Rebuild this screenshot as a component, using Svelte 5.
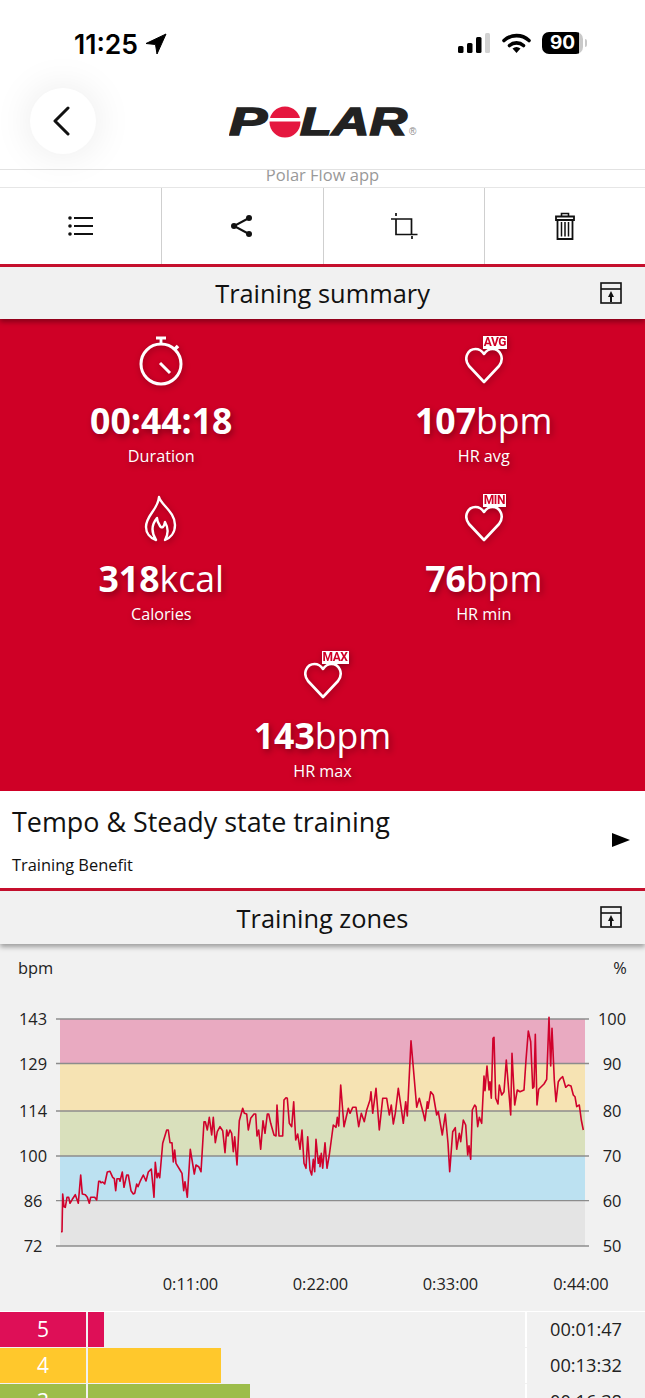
<script>
	// hr trace, measured as (x*3, y*3) from the top of the chart crop
	const hrLeft = [183,695,186,695,188,582,192,620,196,622,201,592,206,592,210,610,217,598,226,584,235,610,242,525,247,582,256,584,262,592,268,610,272,592,284,592,290,600,296,544,300,544,303,548,308,546,314,552,322,516,330,514,338,532,343,536,347,572,351,536,358,536,360,544,367,516,372,562,380,525,385,525,393,572,400,582,404,580,410,552,414,560,420,545,430,525,438,543,445,516,454,507,462,592,466,487,471,533,475,520,479,533,488,430,500,390,505,390,510,428,516,428,520,486,524,450,528,490,540,510,546,520,551,572,555,545,562,592,571,448,578,492,583,522,588,495,596,500,603,515,612,365,616,365,622,390,628,352,635,405,640,352,646,428,652,395,660,380,668,392,675,458,680,390,684,408,690,390,695,400,700,455,704,410,711,495,718,362,728,325,733,340,740,342,745,390,752,355,762,342,767,342,771,408,776,390,782,448,789,362,795,400,802,342,806,342,812,370,822,405,828,408,831,315,837,408,848,408,852,300,858,293,862,295,868,370,875,380,881,305,887,420,893,402,900,448,906,390,912,490,918,505,923,410,930,510,935,525,940,478,944,515,948,418,955,490,960,468];
	const hrRight = [0,500,4,460,8,505,15,428,21,505,28,465,40,375,48,382,52,352,56,378,62,255,72,380,85,325,90,340,98,322,108,322,116,380,124,340,133,365,140,330,150,300,153,275,158,340,168,265,178,390,188,295,200,295,208,345,214,315,220,372,226,340,235,265,243,320,250,370,257,305,262,348,273,122,290,322,298,295,310,340,315,362,322,305,324,325,332,275,340,285,350,345,355,335,367,405,376,342,384,430,389,515,398,395,406,383,410,448,418,400,422,425,430,360,437,375,443,465,447,437,452,478,457,330,464,315,468,320,473,380,478,352,485,370,492,228,495,272,501,198,507,270,510,245,514,295,519,115,522,112,527,295,534,312,538,255,545,285,552,275,559,180,566,270,572,345,576,160,584,315,592,270,600,275,612,270,618,180,625,93,632,125,638,265,642,260,646,103,651,315,656,268,662,262,672,252,680,238,687,52,692,198,696,85,703,240,708,305,715,245,722,235,728,230,737,262,745,255,753,258,760,285,765,290,770,320,778,315,784,360,790,390];

	function toPoints(raw, offsetX) {
		const out = [];
		for (let i = 0; i < raw.length; i += 2) {
			out.push(`${(offsetX + raw[i] / 3).toFixed(1)},${(1000 + raw[i + 1] / 3).toFixed(1)}`);
		}
		return out;
	}
	const hrLine = [...toPoints(hrLeft, 0), ...toPoints(hrRight, 320)].join(' ');

	const bands = [
		{ y: 1019, h: 44.5, fill: '#e9aac1' },
		{ y: 1063.5, h: 47.5, fill: '#f6e3b3' },
		{ y: 1111, h: 45, fill: '#d9e0bc' },
		{ y: 1156, h: 44.7, fill: '#bce1f1' },
		{ y: 1200.7, h: 45.3, fill: '#e4e4e4' }
	];
	const gridY = [
		{ y: 1019, bpm: 143, pct: 100 },
		{ y: 1063.5, bpm: 129, pct: 90 },
		{ y: 1111, bpm: 114, pct: 80 },
		{ y: 1156, bpm: 100, pct: 70 },
		{ y: 1200.7, bpm: 86, pct: 60 },
		{ y: 1246, bpm: 72, pct: 50 }
	];
	const ticks = [
		{ x: 190.5, label: '0:11:00' },
		{ x: 320.5, label: '0:22:00' },
		{ x: 450.5, label: '0:33:00' },
		{ x: 581, label: '0:44:00' }
	];
	const zones = [
		{ n: 5, color: '#de0f57', width: 16, time: '00:01:47' },
		{ n: 4, color: '#ffc82c', width: 133, time: '00:13:32' },
		{ n: 3, color: '#9dbd4a', width: 162, time: '00:16:38' }
	];
</script>

{#snippet foldIcon()}
	<svg class="fold" viewBox="0 0 22 22" width="22" height="22">
		<rect x="1" y="1" width="20" height="20" fill="none" stroke="#111" stroke-width="1.6" />
		<path d="M1 7H21" stroke="#111" stroke-width="1.6" />
		<path d="M11 9L14 15H12V20H10V15H8Z" fill="#111" />
	</svg>
{/snippet}

{#snippet heart(tag)}
	<div class="heart">
		<svg viewBox="0 0 40 37" width="40" height="37">
			<path d="M20 35L5 19C-1 11 4 2 11.500 2C15 2 18 4 20 7C22 4 25 2 28.500 2C36 2 41 11 35 19Z" fill="none" stroke="#fff" stroke-width="2.600" stroke-linejoin="round" />
		</svg>
		<span class="tag">{tag}</span>
	</div>
{/snippet}

<div class="screen">
	<div class="status">
		<div class="clock">
			<span>11:25</span>
			<svg viewBox="0 0 22 22" width="22" height="22">
				<path d="M21 1L1 10.500L10.500 11.500L12 21Z" fill="#000" stroke="#000" stroke-width="1" stroke-linejoin="round" />
			</svg>
		</div>
		<div class="indicators">
			<svg viewBox="0 0 32 20" width="32" height="20">
				<rect x="0" y="13" width="5.500" height="7" rx="1.500" fill="#000" />
				<rect x="9" y="10" width="5.500" height="10" rx="1.500" fill="#000" />
				<rect x="18" y="4" width="5.500" height="16" rx="1.500" fill="#000" />
				<rect x="27" y="0" width="5" height="20" rx="1.500" fill="#d2d2d2" />
			</svg>
			<svg class="wifi" viewBox="0 0 29 20" width="29" height="20">
				<path d="M2 7.500C9 1 20 1 27 7.500" fill="none" stroke="#000" stroke-width="3.600" stroke-linecap="round" />
				<path d="M7.500 12.500C11.500 9 17.500 9 21.500 12.500" fill="none" stroke="#000" stroke-width="3.600" stroke-linecap="round" />
				<path d="M10.500 15.500C13 13.500 16 13.500 18.500 15.500L14.500 20Z" fill="#000" />
			</svg>
			<div class="battery"><span>90</span></div>
		</div>
	</div>

	<header class="brand">
		<svg class="logo" viewBox="0 0 192 34" width="192" height="34" role="img" aria-label="Polar">
			<text transform="translate(0 29) scale(1.5 1)">P</text>
			<circle cx="56" cy="16" r="15.500" fill="#e5173f" />
			<rect x="40" y="12" width="32" height="3.500" fill="#fff" />
			<text transform="translate(71 29) scale(1.37 1)">LAR</text>
			<text class="mark" x="180" y="29">®</text>
		</svg>
	</header>
	<button class="back" aria-label="Back">
		<svg viewBox="0 0 18 30" width="18" height="30">
			<path d="M16 2L3 15L16 28" fill="none" stroke="#111" stroke-width="3" stroke-linecap="round" stroke-linejoin="round" />
		</svg>
	</button>

	<div class="strip"><span>Polar Flow app</span></div>

	<nav class="tools">
		<div class="tool">
			<svg viewBox="0 0 26 20" width="26" height="20">
				<circle cx="2" cy="2" r="1.800" fill="#111" />
				<circle cx="2" cy="10" r="1.800" fill="#111" />
				<circle cx="2" cy="18" r="1.800" fill="#111" />
				<path d="M6 2H25M6 10H25M6 18H25" stroke="#111" stroke-width="1.900" />
			</svg>
		</div>
		<div class="tool">
			<svg viewBox="0 0 24 24" width="24" height="24">
				<path d="M19 4L4 12L19 20" fill="none" stroke="#111" stroke-width="2" />
				<circle cx="19" cy="4" r="3" fill="#111" />
				<circle cx="4" cy="12" r="3" fill="#111" />
				<circle cx="19" cy="20" r="3" fill="#111" />
			</svg>
		</div>
		<div class="tool">
			<svg viewBox="0 0 28 28" width="28" height="28">
				<path d="M6 1V4M22 24V27M6 7H21.500V22M6 7V22.500H27.500M1 7H6" fill="none" stroke="#111" stroke-width="1.700" />
			</svg>
		</div>
		<div class="tool">
			<svg viewBox="0 0 20 28" width="20" height="28">
				<path d="M6.500 4V1.500H13.500V4" fill="none" stroke="#111" stroke-width="1.600" />
				<path d="M1 4.500H19V8H1Z" fill="none" stroke="#111" stroke-width="1.800" />
				<path d="M2.500 8V27H17.500V8" fill="none" stroke="#111" stroke-width="1.800" />
				<path d="M6.500 10V24.500M10 10V24.500M13.500 10V24.500" stroke="#111" stroke-width="1.500" />
			</svg>
		</div>
	</nav>

	<section class="panel-head first">
		<h2>Training summary</h2>
		{@render foldIcon()}
	</section>

	<section class="summary">
		<div class="stat">
			<svg class="ico" viewBox="0 0 48 50" width="48" height="50">
				<circle cx="24" cy="28" r="20" fill="none" stroke="#fff" stroke-width="3" />
				<path d="M24 8V2M19 2H29" stroke="#fff" stroke-width="2.800" />
				<path d="M38 13L41 10" stroke="#fff" stroke-width="3.500" />
				<path d="M23 27L33 37" stroke="#fff" stroke-width="3" />
			</svg>
			<p class="value"><b>00:44:18</b></p>
			<p class="caption">Duration</p>
		</div>
		<div class="stat">
			{@render heart('AVG')}
			<p class="value"><b>107</b>bpm</p>
			<p class="caption">HR avg</p>
		</div>
		<div class="stat">
			<svg class="ico" viewBox="0 0 34 48" width="34" height="48">
				<path d="M15 2C17 10 31 17 31 30C31 38 26 43 21 45C24 40 25 34 21 27C20 32 18 34 16 31C14 28 13 26 13 23C8 29 7 37 12 45C6 43 2 38 2 32C2 20 14 15 15 2Z" fill="none" stroke="#fff" stroke-width="2.400" stroke-linejoin="round" />
			</svg>
			<p class="value"><b>318</b>kcal</p>
			<p class="caption">Calories</p>
		</div>
		<div class="stat">
			{@render heart('MIN')}
			<p class="value"><b>76</b>bpm</p>
			<p class="caption">HR min</p>
		</div>
		<div class="stat wide">
			{@render heart('MAX')}
			<p class="value"><b>143</b>bpm</p>
			<p class="caption">HR max</p>
		</div>
	</section>

	<section class="benefit">
		<div>
			<h3>Tempo &amp; Steady state training</h3>
			<p>Training Benefit</p>
		</div>
		<svg viewBox="0 0 18 14" width="18" height="14"><path d="M0 0L18 7L0 14Z" fill="#000" /></svg>
	</section>

	<section class="panel-head">
		<h2>Training zones</h2>
		{@render foldIcon()}
	</section>

	<section class="chart">
		<svg viewBox="0 944 645 367" width="645" height="367">
			<text x="18" y="973.500" class="lbl">bpm</text>
			<text x="620" y="973.500" class="lbl" text-anchor="middle">%</text>
			{#each bands as b}
				<rect x="60" y={b.y} width="525" height={b.h} fill={b.fill} />
			{/each}
			{#each gridY as g}
				<line x1="56" x2="589" y1={g.y} y2={g.y} stroke="#8c8c8c" stroke-width="1.300" />
				<text x="33" y={g.y + 6} class="lbl" text-anchor="middle">{g.bpm}</text>
				<text x="612" y={g.y + 6} class="lbl" text-anchor="middle">{g.pct}</text>
			{/each}
			<polyline points={hrLine} fill="none" stroke="#d0022c" stroke-width="1.600" stroke-linejoin="round" />
			{#each ticks as t}
				<text x={t.x} y="1289.500" class="lbl" text-anchor="middle">{t.label}</text>
			{/each}
		</svg>
	</section>

	<section class="zones">
		{#each zones as z}
			<div class="zone">
				<div class="num" style="background: {z.color}">{z.n}</div>
				<div class="track"><div class="bar" style="background: {z.color}; width: {z.width}px"></div></div>
				<div class="time">{z.time}</div>
			</div>
		{/each}
	</section>
</div>

<style>
	:global(body) {
		margin: 0;
		background: #fff;
	}

	.screen {
		position: relative;
		width: 645px;
		height: 1398px;
		overflow: hidden;
		background: #f1f1f1;
		font-family: 'Open Sans', sans-serif;
		color: #111;
	}

	.status {
		height: 70px;
		background: #fff;
		display: flex;
		justify-content: space-between;
		padding: 31px 62px 0 74px;
		box-sizing: border-box;
	}

	.clock {
		display: flex;
		align-items: flex-start;
		gap: 7px;
		font-family: Inter, sans-serif;
		font-weight: 600;
		font-size: 26.500px;
		line-height: 26px;
		color: #000;
	}

	.clock svg {
		margin-top: 2px;
	}

	.indicators {
		display: flex;
		align-items: flex-start;
		padding-top: 2px;
	}

	.wifi {
		margin-left: 12px;
	}

	.battery {
		margin: -1px 0 0 11px;
		width: 41px;
		height: 22px;
		border-radius: 7px;
		background: linear-gradient(90deg, #000 90%, #c9c9c9 90%);
		color: #fff;
		font-family: Inter, sans-serif;
		font-weight: 700;
		font-size: 19px;
		line-height: 22px;
		text-align: center;
		position: relative;
	}

	.battery::after {
		content: '';
		position: absolute;
		right: -4px;
		top: 7px;
		width: 2px;
		height: 8px;
		background: #c9c9c9;
		border-radius: 0 2px 2px 0;
	}

	.brand {
		height: 100px;
		background: #fff;
		border-bottom: 1px solid #e2e2e2;
		display: flex;
		justify-content: center;
		padding-top: 36px;
		box-sizing: border-box;
	}

	.logo {
		display: block;
		margin-left: 4px;
	}

	.logo text {
		font-family: 'Liberation Sans', sans-serif;
		font-weight: 700;
		font-style: italic;
		font-size: 38px;
		fill: #222;
		stroke: #222;
		stroke-width: 1.500;
	}

	.logo .mark {
		font-size: 10px;
		font-style: normal;
		font-weight: 400;
		fill: #8a8a8a;
		stroke: none;
	}

	.back {
		position: absolute;
		left: 30px;
		top: 88px;
		width: 66px;
		height: 66px;
		padding: 0;
		border: 0;
		border-radius: 50%;
		background: #fff;
		box-shadow: 0 0 40px rgba(0, 0, 0, 0.09);
		display: flex;
		align-items: center;
		justify-content: center;
	}

	.back svg {
		margin-right: 4px;
	}

	.strip {
		height: 18px;
		background: #fff;
		border-bottom: 1px solid #e6e6e6;
		overflow: hidden;
		text-align: center;
		font-size: 16.500px;
		line-height: 10px;
		color: #999;
		box-sizing: border-box;
	}

	.tools {
		height: 79px;
		box-sizing: border-box;
		background: #fff;
		border-bottom: 3px solid #c8102e;
		display: grid;
		grid-template-columns: repeat(4, 1fr);
	}

	.tool {
		display: flex;
		align-items: center;
		justify-content: center;
		border-left: 1px solid #cfcfcf;
	}

	.tool:first-child {
		border-left: 0;
	}

	.panel-head {
		position: relative;
		z-index: 1;
		height: 53px;
		background: #f1f1f1;
		display: flex;
		align-items: center;
		justify-content: center;
		box-shadow: 0 3px 5px rgba(0, 0, 0, 0.35);
	}

	.panel-head.first {
		height: 52px;
	}

	.panel-head h2 {
		margin: 0;
		font-weight: 400;
		font-size: 25.400px;
		color: #111;
	}

	.fold {
		position: absolute;
		right: 23px;
		top: 15px;
	}

	.summary {
		height: 472px;
		background: #cf0026;
		display: grid;
		grid-template-columns: 1fr 1fr;
		grid-auto-rows: 157.500px;
		color: #fff;
		text-shadow: 2px 3px 6px rgba(0, 0, 0, 0.35);
	}

	.stat {
		display: flex;
		flex-direction: column;
		align-items: center;
		padding-top: 17px;
		box-sizing: border-box;
	}

	.stat.wide {
		grid-column: 1 / 3;
	}

	.ico {
		height: 50px;
		filter: drop-shadow(1px 2px 3px rgba(0, 0, 0, 0.3));
	}

	.heart {
		position: relative;
		width: 40px;
		height: 50px;
		display: flex;
		align-items: flex-end;
		filter: drop-shadow(1px 2px 3px rgba(0, 0, 0, 0.3));
	}

	.heart svg {
		margin-bottom: 2px;
	}

	.tag {
		position: absolute;
		left: 19px;
		top: 0;
		height: 13px;
		padding: 0 1px;
		background: #fff;
		color: #cf0026;
		font-family: 'Roboto', sans-serif;
		font-weight: 700;
		font-size: 12px;
		letter-spacing: -0.4px;
		line-height: 13px;
		text-shadow: none;
	}

	.value {
		margin: 12px 0 0;
		font-size: 35.600px;
		line-height: 44px;
	}

	.value b {
		font-weight: 700;
	}

	.caption {
		margin: 3px 0 0;
		font-size: 16.200px;
		line-height: 22px;
	}

	.benefit {
		height: 100px;
		box-sizing: border-box;
		background: #fff;
		border-bottom: 3px solid #c8102e;
		padding: 0 15px 0 12px;
		display: flex;
		align-items: center;
		justify-content: space-between;
	}

	.benefit h3 {
		margin: 0;
		font-weight: 400;
		font-size: 26.900px;
		line-height: 36px;
		color: #111;
	}

	.benefit p {
		margin: 14px 0 0;
		font-size: 16.400px;
		line-height: 22px;
		color: #111;
	}

	.chart {
		height: 367px;
	}

	.chart svg {
		display: block;
	}

	.lbl {
		font-family: 'Open Sans', sans-serif;
		font-size: 16.400px;
		fill: #222;
	}

	.zones {
		display: flex;
		flex-direction: column;
		gap: 2px;
		border-top: 1px solid #fff;
	}

	.zone {
		display: grid;
		grid-template-columns: 86px 439px 1fr;
		column-gap: 2px;
		height: 34px;
	}

	.num {
		color: #fff;
		text-align: center;
		font-size: 21px;
		line-height: 35px;
	}

	.time {
		text-align: center;
		font-size: 18.200px;
		line-height: 35px;
		color: #222;
		padding-right: 2px;
	}

	.track {
		border-right: 2px solid #fff;
	}

	.bar {
		height: 100%;
	}
</style>
